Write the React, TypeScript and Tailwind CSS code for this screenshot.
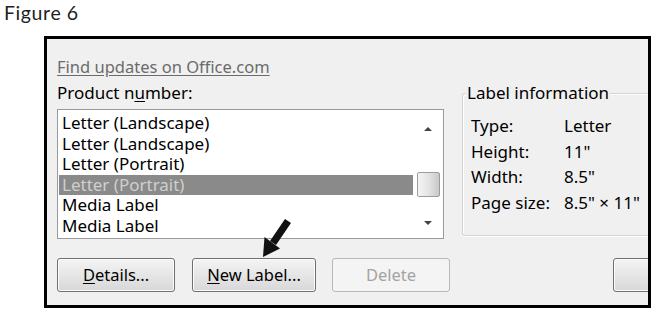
import React from "react";

const items = [
  "Letter (Landscape)",
  "Letter (Landscape)",
  "Letter (Portrait)",
  "Letter (Portrait)",
  "Media Label",
  "Media Label",
];

const info = [
  ["Type:", "Letter"],
  ["Height:", "11\""],
  ["Width:", "8.5\""],
  ["Page size:", "8.5\" × 11\""],
];

const btn =
  "shrink-0 h-[34px] rounded-[3px] border border-[#707070] bg-gradient-to-b from-[#f4f4f4] to-[#d8d8d8] shadow-[inset_0_0_0_1px_#fbfbfb] text-[16.5px] leading-[20px]";

export default function App() {
  return (
    <div className="relative w-[655px] h-[312px] bg-white overflow-hidden font-['Noto_Sans',sans-serif] text-[17px] text-black">
      <div className="pl-[4px] h-[36px] font-['Lato',sans-serif] text-[19.5px] tracking-[0.6px] leading-[25px] text-[#222]">
        Figure 6
      </div>

      {/* dialog */}
      <div className="ml-[44px] w-[607px] h-[272px] border-[3px] border-black bg-[#f0f0f0] overflow-hidden">
        <div className="flex pl-[10px] pt-[18px]">
          {/* left column */}
          <div className="w-[387px] shrink-0">
            <div className="h-[20px] leading-[20px] text-[16.5px] text-[#6b6b6b] underline underline-offset-2">
              Find updates on Office.com
            </div>
            <div className="mt-[6px] h-[20px] leading-[20px]">
              Product n<span className="underline underline-offset-2">u</span>mber:
            </div>
            <div className="mt-[6px] h-[130px] border border-[#9a9a9a] bg-white flex">
              <div className="flex-1 pt-[3px] pl-[1px]">
                {items.map((item, i) => (
                  <div
                    key={i}
                    className={
                      i === 3
                        ? "h-[20.5px] leading-[20.5px] pl-[3px] bg-[#8a8a8a] text-[#cfcfcf]"
                        : "h-[20.5px] leading-[20.5px] pl-[3px]"
                    }
                  >
                    {item}
                  </div>
                ))}
              </div>
              <div className="w-[30px] flex flex-col items-center">
                <svg width="10" height="6" viewBox="0 0 10 6" className="mt-[16px]">
                  <path d="M1 5 L5 1 L9 5 Z" fill="#444" />
                </svg>
                <div className="mt-[40px] w-[23px] h-[25px] rounded-[2px] border border-[#9c9c9c] bg-gradient-to-r from-[#f4f4f4] via-[#e4e4e4] to-[#c8c8c8]" />
                <svg width="10" height="6" viewBox="0 0 10 6" className="mt-[23px]">
                  <path d="M1 1 L5 5 L9 1 Z" fill="#444" />
                </svg>
              </div>
            </div>
          </div>

          {/* label information group */}
          <div className="ml-[18px] mt-[36px] w-[200px] shrink-0">
            <div className="relative h-[143px] border border-r-0 border-[#d4d4d4] rounded-l-[3px] shadow-[inset_1px_1px_0_#ffffff,0_1px_0_#ffffff]">
              <div className="absolute left-[3px] -top-[12px] px-[1px] bg-[#f0f0f0] h-[22px] leading-[22px]">
                Label information
              </div>
              <div className="pt-[19px] pl-[8px]">
                {info.map(([k, v]) => (
                  <div key={k} className="flex h-[25.5px] leading-[25.5px]">
                    <div className="w-[93px]">{k}</div>
                    <div>{v}</div>
                  </div>
                ))}
              </div>
            </div>
          </div>
        </div>

        {/* buttons */}
        <div className="flex pl-[10px] mt-[19px]">
          <button className={`${btn} w-[118px]`}>
            <span className="underline underline-offset-2">D</span>etails...
          </button>
          <button className={`${btn} ml-[17px] w-[124px]`}>
            <span className="underline underline-offset-2">N</span>ew Label...
          </button>
          <button className="shrink-0 ml-[16px] w-[118px] h-[34px] rounded-[3px] border border-[#b8b8b8] bg-[#f4f4f4] text-[#a3a3a3] text-[16.5px]">
            Delete
          </button>
          <button className={`${btn} ml-[163px] w-[100px]`} />
        </div>
      </div>

      {/* pointer arrow */}
      <svg className="absolute left-[255px] top-[215px]" width="40" height="46" viewBox="255 215 40 46">
        <path d="M285 219 L291 223 L276 245 L270 241 Z" fill="#111" />
        <path d="M263 257 L264.5 237 L280 248.5 Z" fill="#111" />
      </svg>
    </div>
  );
}
